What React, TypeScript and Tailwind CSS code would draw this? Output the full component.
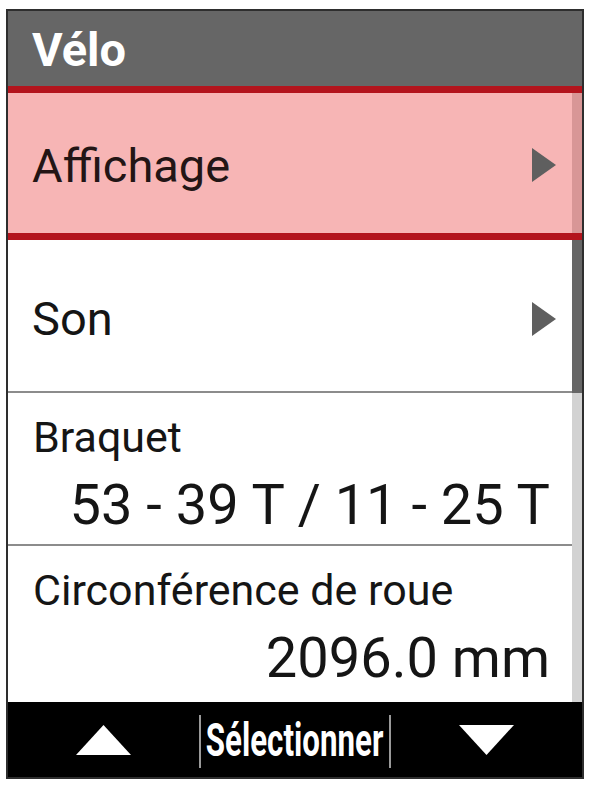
import type { ReactNode } from "react";

function Arrow({ dir }: { dir: "up" | "down" | "right" }) {
    if (dir === "right") {
        return (
            <svg width="24" height="34" viewBox="0 0 24 34" className="shrink-0">
                <polygon points="0,0 24,17 0,34" fill="#5f5f5f" />
            </svg>
        );
    }
    const pts = dir === "up" ? "0,30 27.5,0 55,30" : "0,0 55,0 27.5,30";
    return (
        <svg width="55" height="30" viewBox="0 0 55 30">
            <polygon points={pts} fill="#ffffff" />
        </svg>
    );
}

function MenuRow({ label, selected = false }: { label: string; selected?: boolean }) {
    return (
        <div
            className={
                selected
                    ? "relative z-10 flex h-[154px] items-center justify-between border-y-[7px] border-[#b3141d] bg-[#f5a3a3]/80 pl-[24px] pr-[26px] pt-[4px] text-[#231515]"
                    : "flex h-[153px] items-center justify-between border-b-2 border-[#8c8c8c] pl-[24px] pr-[26px] pt-[6px] text-[#151515]"
            }
        >
            <span className="text-[47px] leading-none">{label}</span>
            <Arrow dir="right" />
        </div>
    );
}

function ValueRow({ label, value, last = false }: { label: string; value: string; last?: boolean }) {
    return (
        <div
            className={
                last
                    ? "flex h-[156px] flex-col pl-[25px] pr-[32px] pt-[23px] text-[#151515]"
                    : "flex h-[153px] flex-col border-b-2 border-[#8c8c8c] pl-[25px] pr-[32px] pt-[23px] text-[#151515]"
            }
        >
            <span className="text-[43px] leading-none">{label}</span>
            <span className="mt-[18px] self-end text-[56px] leading-none">{value}</span>
        </div>
    );
}

function FooterCell({ children, divider = false }: { children: ReactNode; divider?: boolean }) {
    return (
        <div className="relative flex items-center justify-center">
            {divider && <span className="absolute left-0 top-[13px] h-[53px] w-[2px] bg-[#9a9a9a]" />}
            {children}
        </div>
    );
}

export default function App() {
    return (
        <div className="min-h-screen bg-white pl-[6px] pt-[9px] font-['Roboto',sans-serif]">
            <div className="flex h-[770px] w-[578px] flex-col overflow-hidden border-2 border-[#2e2e2e] bg-white">
                <header className="flex h-[75px] shrink-0 items-center bg-[#666666] pl-[24px] pt-[2px] text-[47px] font-bold leading-none text-white">
                    Vélo
                </header>

                <div className="relative flex-1 overflow-hidden">
                    <MenuRow label="Affichage" selected />
                    <MenuRow label="Son" />
                    <ValueRow label="Braquet" value="53 - 39 T / 11 - 25 T" />
                    <ValueRow label="Circonférence de roue" value="2096.0 mm" last />

                    {/* scrollbar */}
                    <div className="absolute bottom-0 right-0 top-0 flex w-[10px] flex-col bg-[#d2d2d2]">
                        <div className="h-[307px] bg-[#666666]" />
                    </div>
                </div>

                <footer className="grid h-[75px] shrink-0 grid-cols-3 bg-black">
                    <FooterCell>
                        <Arrow dir="up" />
                    </FooterCell>
                    <FooterCell divider>
                        <span className="scale-x-[0.68] whitespace-nowrap text-[46px] font-bold leading-none text-white">
                            Sélectionner
                        </span>
                        <span className="absolute right-0 top-[13px] h-[53px] w-[2px] bg-[#9a9a9a]" />
                    </FooterCell>
                    <FooterCell>
                        <Arrow dir="down" />
                    </FooterCell>
                </footer>
            </div>
        </div>
    );
}
